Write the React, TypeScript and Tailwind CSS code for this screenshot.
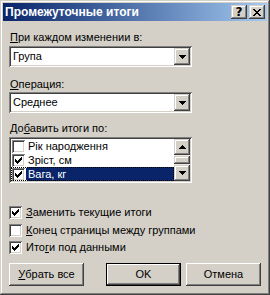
import React from 'react';

// classic 3D edges
const frame =
  'shadow-[inset_-1px_-1px_#404040,inset_1px_1px_#d4d0c8,inset_-2px_-2px_#808080,inset_2px_2px_#ffffff]';
const raised =
  'shadow-[inset_-1px_-1px_#404040,inset_1px_1px_#ffffff,inset_-2px_-2px_#808080,inset_2px_2px_#d4d0c8]';
const sunken =
  'shadow-[inset_1px_1px_#808080,inset_-1px_-1px_#ffffff,inset_2px_2px_#404040,inset_-2px_-2px_#d4d0c8]';

const Pixels = ({ rows, color = '#000' }: { rows: string[]; color?: string }) => (
  <svg width={rows[0].length} height={rows.length} shapeRendering="crispEdges" className="block">
    {rows.flatMap((r, y) =>
      r.split('').map((c, x) =>
        c === 'x' ? <rect key={`${x}-${y}`} x={x} y={y} width={1} height={1} fill={color} /> : null
      )
    )}
  </svg>
);

const arrowDown = ['xxxxxxx', '.xxxxx.', '..xxx..', '...x...'];
const arrowUp = ['...x...', '..xxx..', '.xxxxx.', 'xxxxxxx'];
const checkMark = ['......x', '.....xx', 'x...xxx', 'xx.xxx.', 'xxxxx..', '.xxx...', '..x....'];
const closeX = ['xx....xx', '.xx..xx.', '..xxxx..', '...xx...', '..xxxx..', '.xx..xx.', 'xx....xx'];

const CheckBox = ({ checked }: { checked?: boolean }) => (
  <div className={`w-[13px] h-[13px] shrink-0 bg-white p-[3px] ${sunken}`}>
    {checked && <Pixels rows={checkMark} />}
  </div>
);

const Combo = ({ value, className = '' }: { value: string; className?: string }) => (
  <div className={`w-[183px] h-[21px] bg-white p-[2px] flex ${sunken} ${className}`}>
    <div className="flex-1 flex items-center pl-[2px]">{value}</div>
    <div className={`w-[16px] h-[17px] bg-[#d4d0c8] flex items-center justify-center ${frame}`}>
      <Pixels rows={arrowDown} />
    </div>
  </div>
);

const items = [
  { label: 'Рік народження', checked: false },
  { label: 'Зріст, см', checked: true },
  { label: 'Вага, кг', checked: true, selected: true },
];

const ListBox = ({ className = '' }: { className?: string }) => (
  <div className={`w-[183px] h-[46px] bg-white p-[2px] flex ${sunken} ${className}`}>
    <div className="flex-1 flex flex-col">
      {items.map((it) => (
        <div
          key={it.label}
          className={`h-[14px] flex ${it.selected ? 'outline-1 outline-dotted outline-black -outline-offset-1' : ''}`}
        >
          <div className="w-[15px] pl-[1px] flex items-center">
            <CheckBox checked={it.checked} />
          </div>
          <div
            className={`flex-1 h-full flex items-center pl-[2px] ${
              it.selected ? 'bg-[#0a246a] text-white border-y border-r border-dotted border-[#f5db95]' : ''
            }`}
          >
            {it.label}
          </div>
        </div>
      ))}
    </div>
    <div className="w-[16px] flex flex-col">
      <div className={`h-[16px] bg-[#d4d0c8] flex items-center justify-center ${frame}`}>
        <Pixels rows={arrowUp} />
      </div>
      <div className="h-[10px] bg-[#ebe9e5] pt-[1px]">
        <div className={`h-[8px] bg-[#d4d0c8] ${frame}`} />
      </div>
      <div className={`h-[16px] bg-[#d4d0c8] flex items-center justify-center ${frame}`}>
        <Pixels rows={arrowDown} />
      </div>
    </div>
  </div>
);

const CheckRow = ({ checked, children, className = '' }: { checked?: boolean; children: React.ReactNode; className?: string }) => (
  <div className={`h-[13px] flex items-center ${className}`}>
    <CheckBox checked={checked} />
    <span className="ml-[4px] leading-[13px]">{children}</span>
  </div>
);

const Button = ({ children, def, className = '' }: { children: React.ReactNode; def?: boolean; className?: string }) =>
  def ? (
    <div className={`w-[75px] h-[23px] border border-black ${className}`}>
      <div className={`w-full h-full bg-[#d4d0c8] flex items-center justify-center ${raised}`}>{children}</div>
    </div>
  ) : (
    <div className={`w-[75px] h-[23px] bg-[#d4d0c8] flex items-center justify-center ${raised} ${className}`}>
      {children}
    </div>
  );

export default function App() {
  return (
    <div
      className={`w-[270px] h-[295px] bg-[#d4d0c8] p-[3px] text-[11px] text-black font-['Liberation_Sans',sans-serif] ${frame}`}
    >
      <div className="h-[18px] flex items-center justify-between bg-linear-to-r from-[#0a246a] to-[#a6caf0] pl-[2px] pr-[2px]">
        <span className="text-white font-bold text-[12px] leading-none">Промежуточные итоги</span>
        <div className="flex gap-[2px]">
          <div className={`w-[16px] h-[14px] bg-[#d4d0c8] flex items-center justify-center ${frame}`}>
            <span className="font-bold text-[12px] leading-none font-['DejaVu_Sans',sans-serif]">?</span>
          </div>
          <div className={`w-[16px] h-[14px] bg-[#d4d0c8] flex items-center justify-center ${frame}`}>
            <Pixels rows={closeX} />
          </div>
        </div>
      </div>

      <div className="pl-[6px] leading-[13px]">
        <div className="mt-[10px] h-[13px] pl-[1px]">
          <span className="underline">П</span>ри каждом изменении в:
        </div>
        <Combo className="mt-[2px]" value="Група" />

        <div className="mt-[11px] h-[13px] pl-[1px]">
          <span className="underline">О</span>перация:
        </div>
        <Combo className="mt-[1px]" value="Среднее" />

        <div className="mt-[9px] h-[13px] pl-[1px]">
          До<span className="underline">б</span>авить итоги по:
        </div>
        <ListBox className="mt-[2px]" />

        <CheckRow checked className="mt-[23px]">
          <span className="underline">З</span>аменить текущие итоги
        </CheckRow>
        <CheckRow className="mt-[5px]">
          <span className="underline">К</span>онец страницы между группами
        </CheckRow>
        <CheckRow checked className="mt-[4px]">
          Ито<span className="underline">г</span>и под данными
        </CheckRow>

        <div className="mt-[9px] flex">
          <Button>
            <span className="underline">У</span>брать все
          </Button>
          <Button def className="ml-[22px]">
            OK
          </Button>
          <Button className="ml-[5px]">Отмена</Button>
        </div>
      </div>
    </div>
  );
}
